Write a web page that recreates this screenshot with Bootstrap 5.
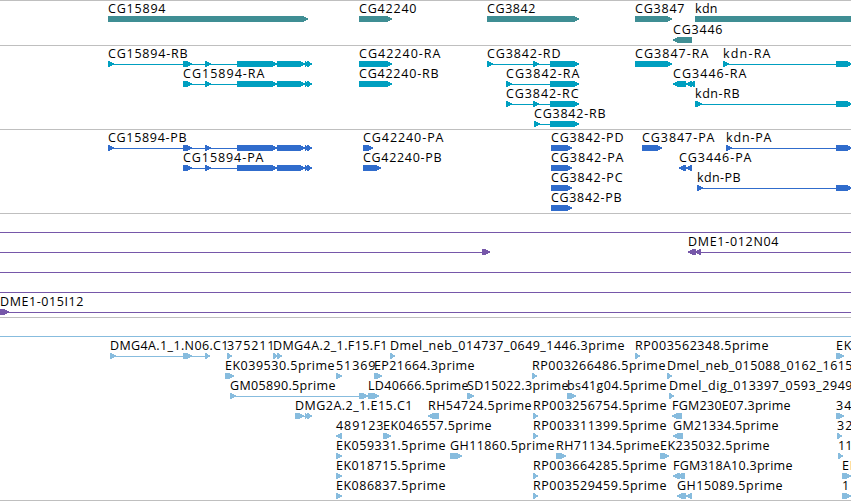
<!DOCTYPE html>
<html lang="en">
<head>
  <meta charset="UTF-8" />
  <meta name="viewport" content="width=device-width, initial-scale=1" />
  <title>Genome Browser</title>
  <link href="https://cdn.jsdelivr.net/npm/bootstrap@5.3.3/dist/css/bootstrap.min.css" rel="stylesheet" />

  <style>
  body {
    background: #fff;
  }

  .browser {
    width: 851px;
    height: 501px;
    border-bottom: 1px solid #bfbfbf;
  }

  .track {
    border-top: 1px solid #bfbfbf;
    padding: 1px 0 2px;
  }

  .track:last-child {
    padding-bottom: 1px;
  }

  .lane {
    width: 851px;
    height: 20px;
    overflow: visible;
    fill: currentColor;
    shape-rendering: crispEdges;
  }

  .lane text {
    font-family: "Open Sans", "DejaVu Sans", sans-serif;
    font-size: 12.5px;
    fill: #000;
  }

  .genes { color: #3f8e94; padding-bottom: 1px; }
  .genes .lane { height: 21px; }
  .transcripts { color: #009fc0; }
  .proteins { color: #306ccc; }
  .bacs { color: #7657a9; }
  .ests { color: #87bcde; }
  </style>
</head>
<body>

<main class="browser d-flex flex-column overflow-hidden">
  <section class="track genes d-flex flex-column" id="genes"></section>
  <section class="track transcripts d-flex flex-column" id="transcripts"></section>
  <section class="track proteins d-flex flex-column" id="proteins"></section>
  <section class="track bacs d-flex flex-column" id="bacs"></section>
  <section class="track ests d-flex flex-column" id="ests"></section>
</main>

<script>
// feature: [label, label start, label end, blocks, strand]
// a block is [start, end]; blocks of one feature are joined by a thin line
const tracks = {
  genes: [
    [
      ["CG15894", 108, 165, [[108, 308]]],
      ["CG42240", 359, 416, [[359, 392]]],
      ["CG3842", 487, 535, [[487, 579]]],
      ["CG3847", 635, 684, [[635, 672]]],
      ["kdn", 695, 717, [[695, 860]]]
    ],
    [["CG3446", 673, 722, [[673, 692]], "-"]]
  ],
  transcripts: [
    [
      ["CG15894-RB", 108, 187, [[108, 114], [183, 192], [205, 211], [237, 277], [277, 305], [305, 309], [307, 312]]],
      ["CG42240-RA", 359, 440, [[359, 392]]],
      ["CG3842-RD", 487, 560, [[487, 493], [533, 539], [550, 579]]],
      ["CG3847-RA", 635, 708, [[635, 672]]],
      ["kdn-RA", 723, 770, [[723, 729], [836, 852]]]
    ],
    [
      ["CG15894-RA", 183, 264, [[183, 192], [205, 211], [237, 277], [277, 305], [305, 309], [307, 312]]],
      ["CG42240-RB", 359, 438, [[359, 392]]],
      ["CG3842-RA", 506, 579, [[506, 512], [550, 579]]],
      ["CG3446-RA", 673, 746, [[673, 686], [686, 692], [690, 695]], "-"]
    ],
    [
      ["CG3842-RC", 506, 578, [[506, 512], [533, 539], [550, 579]]],
      ["kdn-RB", 695, 739, [[695, 702], [836, 852]]]
    ],
    [["CG3842-RB", 534, 605, [[534, 540], [550, 579]]]]
  ],
  proteins: [
    [
      ["CG15894-PB", 108, 186, [[108, 114], [183, 192], [205, 211], [237, 277], [277, 305], [305, 309], [307, 312]]],
      ["CG42240-PA", 363, 443, [[363, 373]]],
      ["CG3842-PD", 551, 623, [[551, 572]]],
      ["CG3847-PA", 642, 714, [[642, 662]]],
      ["kdn-PA", 726, 771, [[726, 732], [836, 852]]]
    ],
    [
      ["CG15894-PA", 183, 263, [[183, 192], [205, 211], [237, 277], [277, 305], [305, 309], [307, 312]]],
      ["CG42240-PB", 363, 441, [[363, 381]]],
      ["CG3842-PA", 551, 623, [[551, 572]]],
      ["CG3446-PA", 679, 751, [[679, 686], [686, 692]], "-"]
    ],
    [
      ["CG3842-PC", 551, 622, [[551, 572]]],
      ["kdn-PB", 697, 740, [[697, 703], [836, 852]]]
    ],
    [["CG3842-PB", 551, 621, [[551, 572]]]]
  ],
  bacs: [
    [["", 0, 0, [[-20, -10], [870, 880]]]],
    [
      ["", 0, 0, [[-20, -10], [482, 490]]],
      ["DME1-012N04", 688, 778, [[688, 696], [695, 701], [870, 880]], "-"]
    ],
    [["", 0, 0, [[-20, -10], [870, 880]]]],
    [["", 0, 0, [[-20, -10], [870, 880]]]],
    [["DME1-015I12", 0, 83, [[0, 9], [870, 880]]]]
  ],
  ests: [
    [["", 0, 0, [[-20, -10], [870, 880]]]],
    [
      ["DMG4A.1_1.N06.C1", 110, 228, [[110, 116], [183, 192], [205, 210]]],
      ["375211", 227, 274, [[227, 232]]],
      ["DMG4A.2_1.F15.F1", 273, 387, [[273, 278], [277, 282]]],
      ["Dmel_neb_014737_0649_1446.3prime", 390, 624, [[390, 395]]],
      ["RP003562348.5prime", 635, 768, [[635, 640]]],
      ["EK", 836, 851, [[836, 844]]]
    ],
    [
      ["EK039530.5prime", 225, 334, [[225, 234]]],
      ["51369", 336, 375, [[336, 342]]],
      ["EP21664.3prime", 374, 474, [[374, 382]]],
      ["RP003266486.5prime", 532, 665, [[532, 537]]],
      ["Dmel_neb_015088_0162_1615", 667, 852, [[667, 672]]]
    ],
    [
      ["GM05890.5prime", 230, 335, [[230, 236], [359, 368], [368, 379]]],
      ["LD40666.5prime", 368, 468, []],
      ["SD15022.3prime", 467, 568, [[467, 474]]],
      ["bs41g04.5prime", 567, 666, [[567, 576]]],
      ["Dmel_dig_013397_0593_2949", 669, 852, [[669, 674]]]
    ],
    [
      ["DMG2A.2_1.E15.C1", 295, 412, [[295, 304], [305, 309], [307, 312]]],
      ["RH54724.5prime", 428, 531, [[428, 439]], "-"],
      ["RP003256754.5prime", 533, 666, [[533, 538]]],
      ["FGM230E07.3prime", 672, 790, [[672, 682]], "-"],
      ["34", 836, 851, [[836, 844]]]
    ],
    [
      ["489123", 336, 383, [[336, 342]], "-"],
      ["EK046557.5prime", 383, 491, [[383, 391]]],
      ["RP003311399.5prime", 533, 666, [[533, 538]]],
      ["GM21334.5prime", 673, 778, [[673, 683]], "-"],
      ["32", 837, 852, [[837, 842]]]
    ],
    [
      ["EK059331.5prime", 336, 445, [[336, 342]]],
      ["GH11860.5prime", 450, 554, [[450, 462]]],
      ["RH71134.5prime", 556, 659, [[556, 566]]],
      ["EK235032.5prime", 660, 769, [[660, 669]]],
      ["11", 838, 852, [[838, 843]]]
    ],
    [
      ["EK018715.5prime", 336, 445, [[336, 342]]],
      ["RP003664285.5prime", 533, 666, [[533, 538]]],
      ["FGM318A10.3prime", 673, 792, [[673, 680], [677, 685]], "-"],
      ["EK", 842, 857, [[842, 851]]]
    ],
    [
      ["EK086837.5prime", 336, 445, [[336, 342]]],
      ["RP003529459.5prime", 533, 666, [[533, 538]]],
      ["GH15089.5prime", 677, 782, [[677, 686], [686, 692]], "-"],
      ["1", 842, 850, [[842, 851]]]
    ]
  ]
};

// block with a pointed head on the strand side
function drawBlock([start, end], strand) {
  const head = Math.min(6, end - start);
  const dir = strand === "-" ? -1 : 1;
  const tail = strand === "-" ? end : start;
  const tip = strand === "-" ? start : end;
  const neck = tip - dir * head;
  const cheek = tip - dir * 2;
  return `<polygon points="${tail},14 ${neck + dir},14 ${cheek},15.5 ${tip},16.4 ${tip},17.2 ${cheek},18.5 ${neck + dir},20 ${tail},20" />`;
}

function drawFeature([label, x, labelEnd, blocks, strand]) {
  let out = "";
  if (blocks.length > 1) {
    const first = blocks[0][0] + 2;
    const last = blocks[blocks.length - 1][1] - 2;
    out += `<rect x="${first}" y="17" width="${last - first}" height="1" />`;
  }
  out += blocks.map(block => drawBlock(block, strand)).join("");
  if (label) {
    out += `<text x="${x}" y="11" textLength="${labelEnd - x + 0.5}">${label}</text>`;
  }
  return out;
}

Object.keys(tracks).forEach(id => {
  document.getElementById(id).innerHTML = tracks[id]
    .map(lane => `<svg class="lane d-block flex-shrink-0">${lane.map(drawFeature).join("")}</svg>`)
    .join("");
});
</script>

<script src="https://cdn.jsdelivr.net/npm/bootstrap@5.3.3/dist/js/bootstrap.bundle.min.js"></script>
</body>
</html>
